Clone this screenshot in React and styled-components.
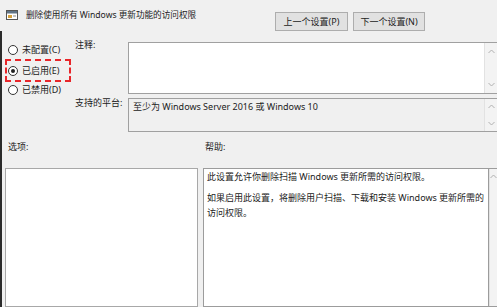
import React from "react";
import styled, { createGlobalStyle } from "styled-components";

const GlobalStyle = createGlobalStyle`
  html, body {
    margin: 0;
    padding: 0;
    background: #f0f0f0;
  }
  * {
    box-sizing: border-box;
  }
`;

const Dialog = styled.div`
  width: 497px;
  height: 307px;
  overflow: hidden;
  background: #f0f0f0;
  color: #222;
  font-family: "Noto Sans", "Noto Sans CJK SC", sans-serif;
  font-size: 9px;
  line-height: 12px;
`;

const Header = styled.div`
  display: flex;
  align-items: flex-start;
  height: 31px;
  padding: 0 72px 0 6px;
`;

const Title = styled.div`
  display: flex;
  align-items: center;
  gap: 8px;
  margin-top: 9px;
  font-size: 8.6px;
`;

const NavButtons = styled.div`
  display: flex;
  gap: 5px;
  margin-left: auto;
  margin-top: 12px;
`;

const Button = styled.div`
  width: ${({ $w }) => $w}px;
  height: 19px;
  display: flex;
  align-items: center;
  justify-content: center;
  background: #e1e1e1;
  border: 1px solid #adadad;
`;

const Body = styled.div`
  border-left: 2px solid #2b2b2b;
  height: 276px;
`;

const Upper = styled.div`
  display: grid;
  grid-template-columns: 73px 53px 1fr;
  grid-template-rows: 52px 34px;
  row-gap: 4px;
  padding-top: 11px;
`;

const RadioList = styled.div`
  grid-row: 1 / span 2;
  display: flex;
  flex-direction: column;
  margin-top: -1px;
`;

const RadioItem = styled.div`
  display: flex;
  align-items: center;
  gap: 4px;
  height: ${({ $h }) => $h}px;
  padding-left: 6px;
`;

const Highlight = styled.div`
  display: flex;
  align-items: center;
  gap: 4px;
  width: 66px;
  height: 23px;
  margin-left: 3px;
  padding-left: 1px;
  border: 2px dashed #e8262a;
`;

const Circle = styled.span`
  width: 10px;
  height: 10px;
  border-radius: 50%;
  border: 1px solid #333;
  background: #fff;
  display: flex;
  align-items: center;
  justify-content: center;

  &::after {
    content: "";
    width: 4px;
    height: 4px;
    border-radius: 50%;
    background: ${({ $checked }) => ($checked ? "#222" : "transparent")};
  }
`;

const FieldLabel = styled.div`
  margin-top: ${({ $mt }) => $mt}px;
`;

const Box = styled.div`
  display: flex;
  background: ${({ $bg }) => $bg};
  border: 1px solid #a0a0a0;
  border-right: none;
  min-height: 0;
`;

const BoxText = styled.div`
  flex: 1;
  padding: 2px 4px;
`;

const ScrollTrack = styled.div`
  width: ${({ $w }) => $w}px;
  display: flex;
  flex-direction: column;
  justify-content: space-between;
  align-items: center;
  padding: ${({ $pad }) => $pad};
  background: #f3f3f3;
  border-left: 1px solid #e2e2e2;
`;

const Lower = styled.div`
  display: grid;
  grid-template-columns: 193px 1fr;
  grid-template-rows: 12px 1fr;
  column-gap: 5px;
  row-gap: 15px;
  padding: 9px 0 0 3px;
  height: 175px;
`;

const SectionLabel = styled.div`
  padding-left: ${({ $pl }) => $pl}px;
`;

const Panel = styled.div`
  background: #fff;
  border: 1px solid #a8a8a8;
`;

const HelpPanel = styled.div`
  display: flex;
  border: 1px solid #9c9c9c;
  border-right: none;
`;

const HelpText = styled.div`
  flex: 1;
  min-width: 0;
  background: #fff;
  padding: 0 3px;
  line-height: 15px;
  border-right: 1px solid #9c9c9c;
  white-space: nowrap;
  overflow: hidden;

  p {
    margin: 0 0 6px;
  }
`;

const Chevron = ({ up }) => (
  <svg width="7" height="5" viewBox="0 0 7 5">
    <path
      d={up ? "M0.5 4 L3.5 1 L6.5 4" : "M0.5 1 L3.5 4 L6.5 1"}
      fill="none"
      stroke="#b0b0b0"
      strokeWidth="1"
    />
  </svg>
);

const PolicyIcon = () => (
  <svg width="12" height="10" viewBox="0 0 12 10">
    <rect x="0.5" y="0.5" width="11" height="9" fill="#fff" stroke="#555" />
    <rect x="1" y="1" width="10" height="2.5" fill="#5f7386" />
    <rect x="2" y="5" width="4" height="3" fill="#d4a03c" />
    <rect x="7" y="5.5" width="3" height="1" fill="#888" />
  </svg>
);

const App = () => {
  return (
    <Dialog>
      <GlobalStyle />
      <Header>
        <Title>
          <PolicyIcon />
          <span>删除使用所有 Windows 更新功能的访问权限</span>
        </Title>
        <NavButtons>
          <Button $w={73}>上一个设置(P)</Button>
          <Button $w={72}>下一个设置(N)</Button>
        </NavButtons>
      </Header>

      <Body>
        <Upper>
          <RadioList>
            <RadioItem $h={18}>
              <Circle />
              未配置(C)
            </RadioItem>
            <Highlight>
              <Circle $checked />
              已启用(E)
            </Highlight>
            <RadioItem $h={16}>
              <Circle />
              已禁用(D)
            </RadioItem>
          </RadioList>

          <FieldLabel $mt={-3}>注释:</FieldLabel>
          <Box $bg="#fff">
            <BoxText />
            <ScrollTrack $w={13} $pad="6px 0 6px">
              <Chevron up />
              <Chevron />
            </ScrollTrack>
          </Box>

          <FieldLabel $mt={-1}>支持的平台:</FieldLabel>
          <Box $bg="#f0f0f0">
            <BoxText>至少为 Windows Server 2016 或 Windows 10</BoxText>
            <ScrollTrack $w={13} $pad="5px 0 5px">
              <Chevron up />
              <Chevron />
            </ScrollTrack>
          </Box>
        </Upper>

        <Lower>
          <SectionLabel $pl={3}>选项:</SectionLabel>
          <SectionLabel $pl={2}>帮助:</SectionLabel>
          <Panel />
          <HelpPanel>
            <HelpText>
              <p>此设置允许你删除扫描 Windows 更新所需的访问权限。</p>
              <p>
                如果启用此设置，将删除用户扫描、下载和安装 Windows 更新所需的
                <br />
                访问权限。
              </p>
            </HelpText>
            <ScrollTrack $w={8} $pad="5px 0 0">
              <Chevron up />
            </ScrollTrack>
          </HelpPanel>
        </Lower>
      </Body>
    </Dialog>
  );
};

export default App;
